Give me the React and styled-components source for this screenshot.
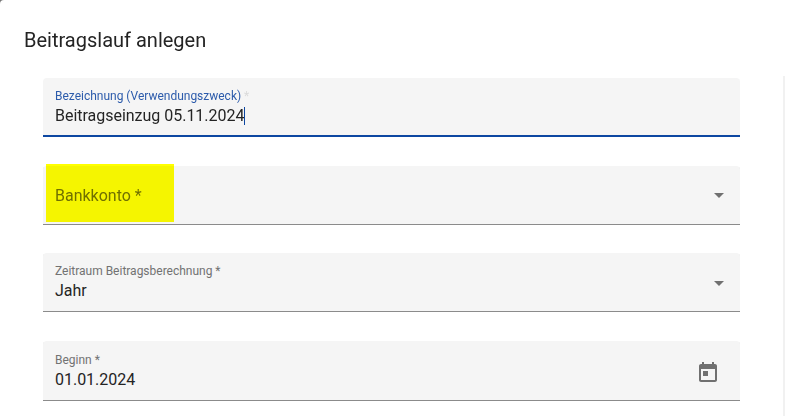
import React from 'react';
import styled, { createGlobalStyle } from 'styled-components';

const fields = [
  {
    id: 'name',
    label: 'Bezeichnung (Verwendungszweck)',
    value: 'Beitragseinzug 05.11.2024',
    focused: true,
    height: 59,
    gap: 0,
  },
  { id: 'account', label: 'Bankkonto', icon: 'arrow', marked: true, height: 59, gap: 29 },
  {
    id: 'period',
    label: 'Zeitraum Beitragsberechnung',
    value: 'Jahr',
    icon: 'arrow',
    iconDrop: 2,
    height: 59,
    gap: 28,
  },
  {
    id: 'start',
    label: 'Beginn',
    value: '01.01.2024',
    icon: 'calendar',
    iconDrop: 4,
    height: 60,
    gap: 29,
    padTop: 11,
  },
];

const CalendarIcon = ({ drop }) => (
  <Calendar viewBox="0 0 24 24" $drop={drop}>
    <path d="M19 3h-1V1h-2v2H8V1H6v2H5c-1.11 0-1.99.9-1.99 2L3 19c0 1.1.89 2 2 2h14c1.1 0 2-.9 2-2V5c0-1.1-.9-2-2-2zm0 16H5V8h14v11zM7 10h5v5H7z" />
  </Calendar>
);

const FormField = ({
  label,
  value,
  icon,
  iconDrop = 0,
  focused,
  marked,
  height,
  gap,
  padTop = 10,
}) => (
  <Field $focused={focused} $height={height} $gap={gap}>
    {value ? (
      <Content $padTop={padTop}>
        <Label $focused={focused}>
          {label}
          <Required $focused={focused}> *</Required>
        </Label>
        <Value>
          {value}
          {focused && <Caret />}
        </Value>
      </Content>
    ) : (
      <Placeholder>{label} *</Placeholder>
    )}
    {icon === 'arrow' && <Arrow $drop={iconDrop} />}
    {icon === 'calendar' && <CalendarIcon drop={iconDrop} />}
    {marked && <Marker />}
  </Field>
);

const App = () => (
  <Backdrop>
    <GlobalStyle />
    <Dialog>
      <Title>Beitragslauf anlegen</Title>
      <Body>
        <Form>
          {fields.map(field => (
            <FormField key={field.id} {...field} />
          ))}
        </Form>
      </Body>
    </Dialog>
  </Backdrop>
);

//Styled components
const GlobalStyle = createGlobalStyle`
  body {
    margin: 0;
    overflow: hidden;
    font-family: Roboto, sans-serif;
  }

  * {
    box-sizing: border-box;
  }
`;

const Backdrop = styled.div`
  height: 100vh;
  background-color: #757575;
`;

const Dialog = styled.div`
  display: flex;
  flex-direction: column;
  height: 100%;
  border-top-left-radius: 4px;
  background-color: #fff;
`;

const Title = styled.h2`
  height: 76px;
  margin: 0;
  padding: 24px 24px 0;
  font-size: 20px;
  font-weight: 400;
  line-height: 32px;
  color: #242424;
`;

const Body = styled.div`
  flex: 1;
  width: 785px;
  padding: 2px 43px 0;
  border-right: 2px solid #f1f1f1;
`;

const Form = styled.div`
  display: flex;
  flex-direction: column;
  width: 697px;
`;

const Field = styled.div`
  position: relative;
  display: flex;
  align-items: center;
  justify-content: space-between;
  height: ${({ $height }) => $height}px;
  margin-top: ${({ $gap }) => $gap}px;
  padding: 0 12px;
  border-radius: 4px 4px 0 0;
  background-color: #f5f5f5;
  box-shadow: inset 0 ${({ $focused }) => ($focused ? '-2px #0d47a1' : '-1px #8b8b8b')};
`;

const Content = styled.div`
  align-self: flex-start;
  padding-top: ${({ $padTop }) => $padTop}px;
`;

const Label = styled.div`
  font-size: 12px;
  line-height: 16px;
  letter-spacing: -0.01px;
  white-space: pre;
  color: ${({ $focused }) => ($focused ? '#2c5bab' : '#727272')};
`;

const Required = styled.span`
  color: ${({ $focused }) => ($focused ? '#dadada' : 'inherit')};
`;

const Value = styled.div`
  display: flex;
  align-items: center;
  height: 23px;
  font-size: 16px;
  letter-spacing: -0.02px;
  color: #242424;
`;

const Caret = styled.span`
  width: 1px;
  height: 18px;
  margin-top: 1px;
  background-color: #0d47a1;
`;

const Placeholder = styled.div`
  font-size: 16px;
  line-height: 24px;
  color: #707070;
`;

const Arrow = styled.span`
  margin: ${({ $drop }) => $drop}px 4px 0 0;
  border: 5px solid transparent;
  border-top-color: #707070;
  border-bottom: 0;
`;

const Calendar = styled.svg`
  width: 24px;
  height: 24px;
  margin: ${({ $drop }) => $drop}px 8px 0 0;
  fill: #707070;
`;

const Marker = styled.span`
  position: absolute;
  top: -2px;
  left: 3px;
  width: 128px;
  height: 58px;
  background-color: #ffff00;
  mix-blend-mode: multiply;
`;

export default App;
